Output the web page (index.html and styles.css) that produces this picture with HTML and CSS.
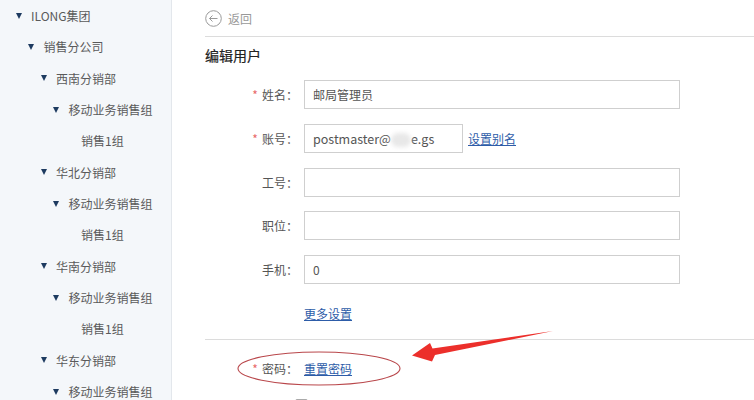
FILE: index.html
```html
<!DOCTYPE html>
<html lang="zh-CN">
<head>
  <meta charset="UTF-8">
  <title>编辑用户</title>
  <link rel="stylesheet" href="styles.css">
</head>
<body>
  <div class="layout">
    <aside class="sidebar">
      <ul class="tree root">
        <li>
          <div class="node"><span class="tri"></span>ILONG集团</div>
          <ul class="tree">
            <li>
              <div class="node"><span class="tri"></span>销售分公司</div>
              <ul class="tree">
                <li>
                  <div class="node"><span class="tri"></span>西南分销部</div>
                  <ul class="tree">
                    <li>
                      <div class="node"><span class="tri"></span>移动业务销售组</div>
                      <ul class="tree">
                        <li><div class="node"><span class="tri blank"></span>销售1组</div></li>
                      </ul>
                    </li>
                  </ul>
                </li>
                <li>
                  <div class="node"><span class="tri"></span>华北分销部</div>
                  <ul class="tree">
                    <li>
                      <div class="node"><span class="tri"></span>移动业务销售组</div>
                      <ul class="tree">
                        <li><div class="node"><span class="tri blank"></span>销售1组</div></li>
                      </ul>
                    </li>
                  </ul>
                </li>
                <li>
                  <div class="node"><span class="tri"></span>华南分销部</div>
                  <ul class="tree">
                    <li>
                      <div class="node"><span class="tri"></span>移动业务销售组</div>
                      <ul class="tree">
                        <li><div class="node"><span class="tri blank"></span>销售1组</div></li>
                      </ul>
                    </li>
                  </ul>
                </li>
                <li>
                  <div class="node"><span class="tri"></span>华东分销部</div>
                  <ul class="tree">
                    <li>
                      <div class="node"><span class="tri"></span>移动业务销售组</div>
                      <ul class="tree">
                        <li><div class="node"><span class="tri blank"></span>销售1组</div></li>
                      </ul>
                    </li>
                  </ul>
                </li>
              </ul>
            </li>
          </ul>
        </li>
      </ul>
    </aside>

    <main class="content">
      <div class="back-bar">
        <a href="#" class="back">
          <svg width="17" height="17" viewBox="0 0 17 17">
            <circle cx="8.5" cy="8.5" r="7.8" fill="none" stroke="#9a9a9a" stroke-width="1"/>
            <path d="M4.5 8.5 H12.5 M4.5 8.5 L7.5 5.5 M4.5 8.5 L7.5 11.5" fill="none" stroke="#9a9a9a" stroke-width="1"/>
          </svg>
          <span>返回</span>
        </a>
      </div>

      <h2 class="title">编辑用户</h2>

      <form class="user-form">
        <div class="row">
          <label class="label"><span class="star">*</span>姓名<span class="colon">：</span></label>
          <div class="field">邮局管理员</div>
        </div>
        <div class="row">
          <label class="label"><span class="star">*</span>账号<span class="colon">：</span></label>
          <div class="field short">postmaster@<span class="blur"></span>e.gs</div>
          <a href="#" class="link alias">设置别名</a>
        </div>
        <div class="row">
          <label class="label">工号<span class="colon">：</span></label>
          <div class="field"></div>
        </div>
        <div class="row">
          <label class="label">职位<span class="colon">：</span></label>
          <div class="field"></div>
        </div>
        <div class="row">
          <label class="label">手机<span class="colon">：</span></label>
          <div class="field">0</div>
        </div>
        <div class="row">
          <span class="label"></span>
          <a href="#" class="link">更多设置</a>
        </div>

        <div class="section">
          <div class="row">
            <label class="label"><span class="star">*</span>密码<span class="colon">：</span></label>
            <a href="#" class="link">重置密码</a>
          </div>
          <div class="check-row">
            <span class="box"></span>
            <span class="check-text">密码发送到手机</span>
          </div>
        </div>
      </form>
    </main>
  </div>

  <svg class="annotation" width="754" height="400" viewBox="0 0 754 400">
    <ellipse cx="319" cy="368.5" rx="81" ry="16.5" fill="none" stroke="#b9474b" stroke-width="1.1"/>
    <polygon points="412,355.5 430,343 432.5,348.5 553,331 435,355 432,361.5" fill="#ec2f2b"/>
  </svg>
</body>
</html>
```

FILE: styles.css
```css
body {
  margin: 0;
  overflow: hidden;
  font-family: "Noto Sans CJK SC", "Noto Sans", sans-serif;
  font-size: 12px;
  color: #333;
  background: #fff;
}

.layout {
  display: flex;
  height: 400px;
  overflow: hidden;
}

/* left org tree */
.sidebar {
  width: 171px;
  flex-shrink: 0;
  background: #f4f7fa;
  border-right: 1px solid #e3e7ec;
  overflow: hidden;
}

.tree {
  list-style: none;
  margin: 0;
  padding: 0 0 0 12.5px;
}

.tree.root {
  padding-left: 15.5px;
}

.node {
  display: flex;
  align-items: center;
  height: 31.33px;
  color: #5a5a5a;
  white-space: nowrap;
}

.tri {
  width: 0;
  height: 0;
  border-left: 3.5px solid transparent;
  border-right: 3.5px solid transparent;
  border-top: 6px solid #1d3b60;
  margin-right: 9.5px;
}

.tri.blank {
  border-top-color: transparent;
}

/* main area */
.content {
  flex: 1;
  padding-left: 33px;
  overflow: hidden;
}

.back-bar {
  height: 36px;
  display: flex;
  align-items: center;
  border-bottom: 1px solid #dcdcdc;
}

.back {
  display: flex;
  align-items: center;
  color: #999;
  text-decoration: none;
}

.back svg {
  margin-right: 6px;
}

.title {
  margin: 8px 0 15px;
  font-size: 14px;
  font-weight: normal;
  line-height: 20px;
  color: #222;
  -webkit-text-stroke: 0.2px #222;
}

.row {
  display: flex;
  align-items: center;
  height: 29px;
  margin-bottom: 14.75px;
}

.label {
  width: 93px;
  margin-right: 6px;
  text-align: right;
  color: #555;
  flex-shrink: 0;
}

.colon {
  font-family: "Noto Sans CJK TC", sans-serif;
}

.star {
  color: #e86a6a;
  margin-right: 4px;
}

.field {
  box-sizing: border-box;
  width: 376px;
  height: 29px;
  line-height: 27px;
  padding: 0 8px;
  border: 1px solid #cfcfcf;
  background: #fff;
  color: #555;
  white-space: nowrap;
}

.field.short {
  width: 159px;
  font-size: 12.5px;
}

.blur {
  display: inline-block;
  width: 20px;
  height: 14px;
  vertical-align: middle;
  background: #e8e8e8;
  border-radius: 7px;
  filter: blur(2px);
}

.link {
  color: #2d5ca8;
  text-decoration: underline;
}

.alias {
  margin-left: 5px;
}

.section {
  border-top: 1px solid #dcdcdc;
  margin-top: -3.75px;
  padding-top: 14px;
}

.check-row {
  display: flex;
  align-items: center;
  padding-left: 90px;
  margin-top: -0.75px;
  color: #555;
}

.box {
  width: 11px;
  height: 11px;
  border: 1px solid #aaa;
  border-radius: 2px;
  margin-right: 6px;
  background: #fff;
}

.annotation {
  position: absolute;
  top: 0;
  left: 0;
  pointer-events: none;
}
```
